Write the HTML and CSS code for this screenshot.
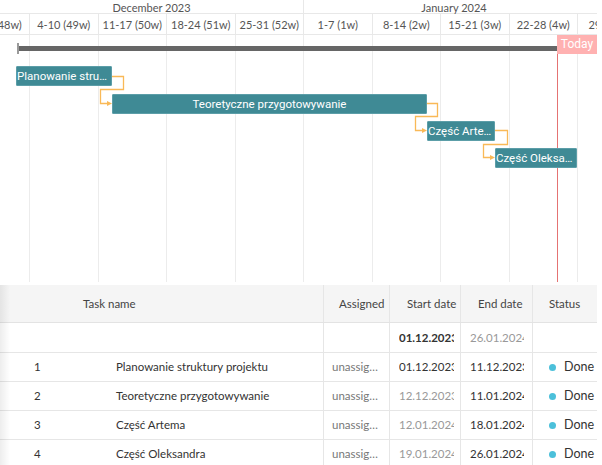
FILE: index.html
```html
<!DOCTYPE html>
<html>
<head>
<meta charset="utf-8">
<link rel="stylesheet" href="styles.css">
</head>
<body>
<div class="gantt">
  <div class="months">
    <div class="month dec">December 2023</div>
    <div class="month jan">January 2024</div>
  </div>
  <div class="weeks">
    <div class="week">27-3 (48w)</div>
    <div class="week">4-10 (49w)</div>
    <div class="week">11-17 (50w)</div>
    <div class="week">18-24 (51w)</div>
    <div class="week">25-31 (52w)</div>
    <div class="week">1-7 (1w)</div>
    <div class="week">8-14 (2w)</div>
    <div class="week">15-21 (3w)</div>
    <div class="week">22-28 (4w)</div>
    <div class="week">29-4 (5w)</div>
  </div>
  <div class="grid">
    <div class="col"></div><div class="col"></div><div class="col"></div><div class="col"></div><div class="col"></div>
    <div class="col"></div><div class="col"></div><div class="col"></div><div class="col"></div><div class="col"></div>
  </div>

  <div class="summary"><span class="cap"></span></div>
  <div class="today-line"></div>
  <div class="today">Today</div>

  <svg class="links" width="597" height="282" viewBox="0 0 597 282">
    <g fill="none" stroke="#f9b957" stroke-width="1.3">
      <path d="M111 76.5 H123.5 V89.5 H100.5 V103.5 H108"/>
      <path d="M426 103.5 H437.5 V116.5 H415.5 V130.5 H423"/>
      <path d="M494 130.5 H507.5 V144.5 H483.5 V157.5 H491"/>
    </g>
    <g fill="#f9b957">
      <path d="M107 101 L112 103.5 L107 106 Z"/>
      <path d="M422 128 L427 130.5 L422 133 Z"/>
      <path d="M490 155 L495 157.5 L490 160 Z"/>
    </g>
  </svg>

  <div class="bar b1">Planowanie struktury projektu</div>
  <div class="bar b2">Teoretyczne przygotowywanie</div>
  <div class="bar b3">Część Artema</div>
  <div class="bar b4">Część Oleksandra</div>
</div>

<div class="table">
  <div class="shadow"></div>
  <div class="row head">
    <div class="c first"><span class="hname">Task name</span></div>
    <div class="c h-as">Assigned</div>
    <div class="c h-sd">Start date</div>
    <div class="c h-ed">End date</div>
    <div class="c h-st">Status</div>
  </div>
  <div class="row sum">
    <div class="c first"></div>
    <div class="c as"></div>
    <div class="c date"><span class="t bold">01.12.2023</span></div>
    <div class="c date"><span class="t muted">26.01.2024</span></div>
    <div class="c st"></div>
  </div>
  <div class="row">
    <div class="c first"><span class="num">1</span><span class="name">Planowanie struktury projektu</span></div>
    <div class="c as"><span class="t">unassigned</span></div>
    <div class="c date"><span class="t">01.12.2023</span></div>
    <div class="c date"><span class="t">11.12.2023</span></div>
    <div class="c st"><span class="dot"></span>Done</div>
  </div>
  <div class="row">
    <div class="c first"><span class="num">2</span><span class="name">Teoretyczne przygotowywanie</span></div>
    <div class="c as"><span class="t">unassigned</span></div>
    <div class="c date"><span class="t muted">12.12.2023</span></div>
    <div class="c date"><span class="t">11.01.2024</span></div>
    <div class="c st"><span class="dot"></span>Done</div>
  </div>
  <div class="row">
    <div class="c first"><span class="num">3</span><span class="name">Część Artema</span></div>
    <div class="c as"><span class="t">unassigned</span></div>
    <div class="c date"><span class="t muted">12.01.2024</span></div>
    <div class="c date"><span class="t">18.01.2024</span></div>
    <div class="c st"><span class="dot"></span>Done</div>
  </div>
  <div class="row">
    <div class="c first"><span class="num">4</span><span class="name">Część Oleksandra</span></div>
    <div class="c as"><span class="t">unassigned</span></div>
    <div class="c date"><span class="t muted">19.01.2024</span></div>
    <div class="c date"><span class="t">26.01.2024</span></div>
    <div class="c st"><span class="dot"></span>Done</div>
  </div>
</div>
</body>
</html>
```

FILE: styles.css
```css
* { box-sizing: border-box; }
body {
  margin: 0;
  background: #fff;
  font-family: Lato, "Open Sans", sans-serif;
  color: #333;
}

.gantt {
  position: relative;
  width: 597px;
  height: 282px;
  overflow: hidden;
}

.months {
  display: flex;
  height: 14px;
  border-bottom: 1px solid #e8e8e8;
}
.month {
  flex: none;
  text-align: center;
  font-size: 11px;
  line-height: 15px;
  color: #555;
  white-space: nowrap;
}
.month.dec { width: 304px; border-right: 1px solid #e8e8e8; }
.month.jan { width: 300px; }

.weeks {
  display: flex;
  height: 21px;
  margin-left: -38.5px;
  border-bottom: 1px solid #e8e8e8;
}
.week {
  flex: none;
  width: 68.5px;
  border-right: 1px solid #e8e8e8;
  text-align: center;
  font-size: 11px;
  line-height: 22px;
  color: #555;
  white-space: nowrap;
  overflow: hidden;
}

.grid {
  display: flex;
  height: 247px;
  margin-left: -38.5px;
}
.col {
  flex: none;
  width: 68.5px;
  border-right: 1px solid #ececec;
}

.summary {
  position: absolute;
  left: 17px;
  top: 46px;
  width: 541px;
  height: 5px;
  background: #666;
}
.summary .cap {
  position: absolute;
  left: 0;
  top: -3px;
  width: 2px;
  height: 11px;
  background: #9a9a9a;
}

.today-line {
  position: absolute;
  left: 557px;
  top: 35px;
  width: 1px;
  height: 247px;
  background: #e57373;
}
.today {
  position: absolute;
  left: 557px;
  top: 35px;
  width: 40px;
  height: 19px;
  background: #ffb1b1;
  color: #fff;
  font-family: Roboto, "Liberation Sans", sans-serif;
  font-size: 12px;
  line-height: 19px;
  text-align: center;
}

.links {
  position: absolute;
  left: 0;
  top: 0;
}

.bar {
  position: absolute;
  height: 20px;
  background: #3f8a95;
  border: 1px solid #5c9ea8;
  border-radius: 1px;
  color: #fff;
  font-family: Roboto, "Liberation Sans", sans-serif;
  font-size: 11.5px;
  line-height: 18px;
  padding: 0;
  text-align: center;
  white-space: nowrap;
  overflow: hidden;
  text-overflow: ellipsis;
}
.b1 { left: 16px; top: 66px; width: 96px; }
.b2 { left: 112px; top: 93.5px; width: 315px; }
.b3 { left: 427px; top: 121px; width: 68px; }
.b4 { left: 495px; top: 148px; width: 82px; }

.table {
  position: relative;
  margin-top: 3px;
  width: 597px;
  font-size: 11.5px;
  color: #333;
}
.shadow {
  position: absolute;
  left: 0;
  top: 0;
  bottom: 0;
  width: 10px;
  background: linear-gradient(to right, rgba(0,0,0,0.07), rgba(0,0,0,0));
  pointer-events: none;
  z-index: 2;
}
.row {
  display: grid;
  grid-template-columns: 323px 66px 71px 72px 65px;
  border-bottom: 1px solid #e6e6e6;
}
.row.head {
  background: #f5f5f5;
  border-bottom-color: #e3e3e3;
}
.c {
  height: 28px;
  line-height: 28px;
  border-left: 1px solid #e6e6e6;
  white-space: nowrap;
  overflow: hidden;
}
.head .c { height: 37px; line-height: 37px; color: #444; }
.sum .c { height: 29px; line-height: 29px; }
.c.first { border-left: none; display: flex; }

.hname { padding-left: 83px; }
.h-as { padding-left: 15px; }
.h-sd { padding-left: 17px; }
.h-ed { padding-left: 17px; }
.h-st { padding-left: 16px; }

.num { width: 116px; padding-left: 34px; flex: none; }
.name { color: #333; }

.t {
  display: block;
  overflow: hidden;
  white-space: nowrap;
}
.as { padding: 0 9px 0 8px; }
.as .t { color: #777; text-overflow: ellipsis; }
.date { padding: 0 6px 0 9px; }
.date .t { text-overflow: clip; color: #333; }
.date .t.muted { color: #999; }
.date .t.bold { font-weight: 700; color: #333; }
.date:nth-child(4) { padding-right: 8px; }

.st {
  padding-left: 16px;
  display: flex;
  align-items: center;
  font-size: 12.5px;
}
.dot {
  width: 7px;
  height: 7px;
  border-radius: 50%;
  background: #4cc0da;
  margin-right: 8px;
  flex: none;
}
```
